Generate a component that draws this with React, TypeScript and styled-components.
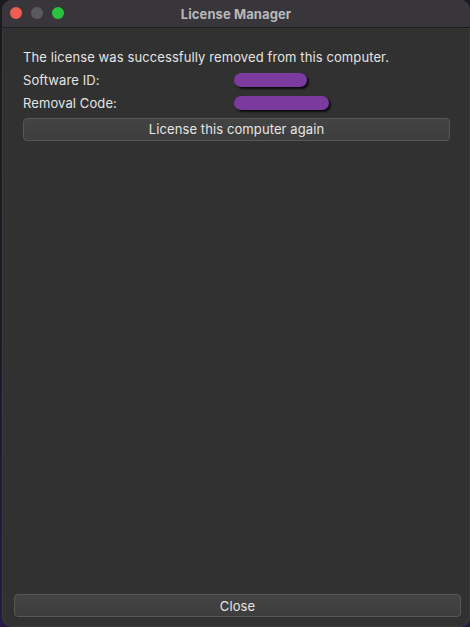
import React, { FC } from 'react';
import styled, { createGlobalStyle } from 'styled-components';

const GlobalStyle = createGlobalStyle`
  html, body {
    margin: 0;
    padding: 0;
    height: 100%;
    background: linear-gradient(180deg, #1b1a20 0%, #1d1a26 55%, #251a45 100%);
    overflow: hidden;
  }
  #root {
    height: 100%;
  }
`;

const Window = styled.div`
  box-sizing: border-box;
  margin-left: 2px;
  width: 468px;
  height: 627px;
  display: flex;
  flex-direction: column;
  background: #313131;
  border-radius: 10px;
  overflow: hidden;
  font-family: Inter, 'Liberation Sans', sans-serif;
  letter-spacing: 0.1px;
  box-shadow: inset 0 0 0 1px #3a3a3a;
`;

const TitleBar = styled.div`
  position: relative;
  height: 27px;
  flex: none;
  display: flex;
  align-items: center;
  justify-content: center;
  background: #38363b;
  border-bottom: 1px solid #1e1e1e;
`;

const Lights = styled.div`
  position: absolute;
  left: 8px;
  top: 7px;
  display: flex;
  gap: 9px;
`;

const Light = styled.span<{ $color: string }>`
  width: 12px;
  height: 12px;
  border-radius: 50%;
  background: ${(p) => p.$color};
`;

const Title = styled.div`
  font-size: 13px;
  font-weight: 700;
  color: #b9b8bc;
`;

const Content = styled.div`
  flex: 1;
  display: flex;
  flex-direction: column;
  padding: 18px 20px 0 21px;
`;

const Line = styled.div`
  font-size: 13px;
  line-height: 22.5px;
  color: #e4e4e4;
`;

const InfoRow = styled.div`
  display: grid;
  grid-template-columns: 211px auto;
  align-items: center;
  font-size: 13px;
  line-height: 23px;
  color: #e4e4e4;
`;

const Redacted = styled.span<{ $width: number }>`
  display: block;
  width: ${(p) => p.$width}px;
  height: 14px;
  border-radius: 7px;
  background: #7a3a9e;
  box-shadow: 2px 2px 2px rgba(0, 0, 0, 0.75);
`;

const ActionRow = styled.div`
  margin-top: 3px;
`;

const Button = styled.button`
  box-sizing: border-box;
  width: 100%;
  height: 23px;
  margin: 0;
  padding: 0;
  border: 1px solid #575757;
  border-radius: 4px;
  background: linear-gradient(180deg, #434343 0%, #3d3d3d 100%);
  color: #e6e6e6;
  font-family: Inter, 'Liberation Sans', sans-serif;
  font-size: 13px;
  letter-spacing: 0.1px;
  cursor: pointer;
`;

const Footer = styled.div`
  flex: none;
  padding: 0 9px 10px 12px;
`;

const App: FC = () => {
  return (
    <>
      <GlobalStyle />
      <Window>
        <TitleBar>
          <Lights>
            <Light $color="#ee5c54" />
            <Light $color="#5a595d" />
            <Light $color="#29c33f" />
          </Lights>
          <Title>License Manager</Title>
        </TitleBar>
        <Content>
          <Line>The license was successfully removed from this computer.</Line>
          <InfoRow>
            <span>Software ID:</span>
            <Redacted $width={73} />
          </InfoRow>
          <InfoRow>
            <span>Removal Code:</span>
            <Redacted $width={95} />
          </InfoRow>
          <ActionRow>
            <Button>License this computer again</Button>
          </ActionRow>
        </Content>
        <Footer>
          <Button>Close</Button>
        </Footer>
      </Window>
    </>
  );
};

export default App;
